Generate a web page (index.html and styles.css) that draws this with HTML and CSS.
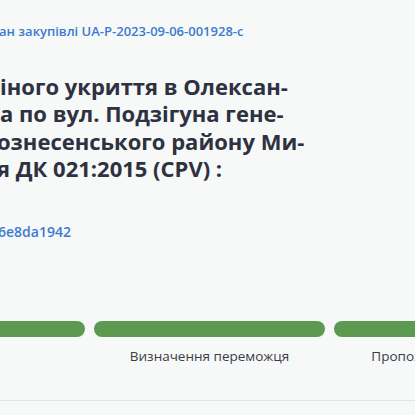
FILE: index.html
```html
<!DOCTYPE html>
<html>
<head>
	<meta charset="utf-8">
	<title>План закупівлі</title>
	<link rel="stylesheet" href="styles.css">
</head>
<body>
<div id="page">
	<a class="plan-link" href="#">ан закупівлі UA-P-2023-09-06-001928-c</a>
	<h1 class="title">
		<span>іного укриття в Олексан-</span>
		<span>а по вул. Подзігуна гене-</span>
		<span class="cut">ознесенського району Ми-</span>
		<span class="cut">я ДК 021:2015 (CPV) :</span>
	</h1>
	<a class="id-link" href="#">6e8da1942</a>
	<div class="steps">
		<div class="step"><div class="bar"></div><div class="label"></div></div>
		<div class="step"><div class="bar"></div><div class="label">Визначення переможця</div></div>
		<div class="step"><div class="bar"></div><div class="label">Пропозиція переможця</div></div>
	</div>
</div>
</body>
</html>
```

FILE: styles.css
```css
body {
	margin: 0;
	padding: 0;
	background-color: #f7f8f8;
	font-family: "Open Sans", "Noto Sans", sans-serif;
	overflow: hidden;
}
#page {
	padding-top: 21px;
	border-bottom: 1px solid #e2e3e3;
	height: 379px;
}
.plan-link {
	display: block;
	margin-left: -1px;
	font-size: 13px;
	font-weight: 600;
	line-height: 20px;
	color: #3b7bcf;
	text-decoration: none;
	white-space: nowrap;
}
.title {
	margin: 32px 0 0 0;
	font-size: 22px;
	font-weight: 700;
	line-height: 27.3px;
	color: #2e3140;
}
.title span {
	display: block;
	white-space: nowrap;
}
.title .cut {
	margin-left: -3px;
}
.id-link {
	display: block;
	margin: 40px 0 0 -2px;
	font-size: 14px;
	font-weight: 600;
	line-height: 20px;
	color: #3b7bcf;
	text-decoration: none;
}
.steps {
	display: flex;
	gap: 9px;
	margin: 79px 0 0 -146px;
}
.step {
	flex: 0 0 231px;
}
.bar {
	height: 16px;
	border-radius: 8px;
	background-color: #5b9a50;
}
.label {
	margin-top: 10px;
	font-size: 13.5px;
	line-height: 18px;
	color: #3a3c48;
	text-align: center;
	white-space: nowrap;
}
```
